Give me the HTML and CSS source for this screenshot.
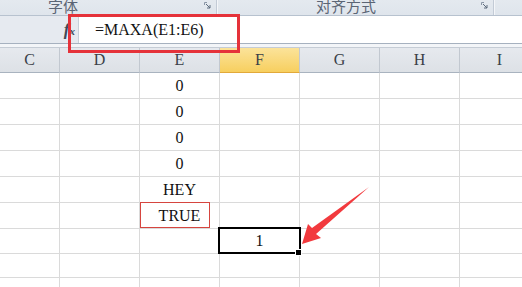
FILE: index.html
```html
<!DOCTYPE html>
<html lang="zh-CN">

<head>
    <meta charset="UTF-8">
    <title>MAXA</title>
    <link rel="stylesheet" href="styles.css">
</head>

<body>
    <div class="window">
        <!-- ribbon group labels -->
        <div class="ribbon">
            <div class="group group-font">
                <span class="group-label">字体</span>
                <svg class="launcher" width="7" height="7" viewBox="0 0 7 7">
                    <path d="M0.5 3 V0.5 H3" fill="none" stroke="#8a96a6" stroke-width="1"/>
                    <path d="M2 2 L6 6 M6 3 V6 H3" fill="none" stroke="#5d6b7d" stroke-width="1"/>
                </svg>
            </div>
            <div class="group group-align">
                <span class="group-label">对齐方式</span>
                <svg class="launcher" width="7" height="7" viewBox="0 0 7 7">
                    <path d="M0.5 3 V0.5 H3" fill="none" stroke="#8a96a6" stroke-width="1"/>
                    <path d="M2 2 L6 6 M6 3 V6 H3" fill="none" stroke="#5d6b7d" stroke-width="1"/>
                </svg>
            </div>
        </div>

        <!-- formula bar -->
        <div class="formula-bar">
            <div class="fx-area"><span class="fx">f<span class="fx-x">x</span></span></div>
            <div class="formula-input">=MAXA(E1:E6)</div>
            <div class="highlight-box"></div>
        </div>

        <div class="spacer"></div>

        <!-- sheet -->
        <div class="sheet">
            <div class="col-head">C</div>
            <div class="col-head">D</div>
            <div class="col-head">E</div>
            <div class="col-head active">F</div>
            <div class="col-head">G</div>
            <div class="col-head">H</div>
            <div class="col-head">I</div>

            <div class="cell"></div><div class="cell"></div><div class="cell">0</div><div class="cell"></div><div class="cell"></div><div class="cell"></div><div class="cell"></div>
            <div class="cell"></div><div class="cell"></div><div class="cell">0</div><div class="cell"></div><div class="cell"></div><div class="cell"></div><div class="cell"></div>
            <div class="cell"></div><div class="cell"></div><div class="cell">0</div><div class="cell"></div><div class="cell"></div><div class="cell"></div><div class="cell"></div>
            <div class="cell"></div><div class="cell"></div><div class="cell">0</div><div class="cell"></div><div class="cell"></div><div class="cell"></div><div class="cell"></div>
            <div class="cell"></div><div class="cell"></div><div class="cell">HEY</div><div class="cell"></div><div class="cell"></div><div class="cell"></div><div class="cell"></div>
            <div class="cell"></div><div class="cell"></div><div class="cell marked">TRUE</div><div class="cell"></div><div class="cell"></div><div class="cell"></div><div class="cell"></div>
            <div class="cell"></div><div class="cell"></div><div class="cell"></div><div class="cell selected">1</div><div class="cell"></div><div class="cell"></div><div class="cell"></div>
            <div class="cell"></div><div class="cell"></div><div class="cell"></div><div class="cell"></div><div class="cell"></div><div class="cell"></div><div class="cell"></div>
            <div class="cell"></div><div class="cell"></div><div class="cell"></div><div class="cell"></div><div class="cell"></div><div class="cell"></div><div class="cell"></div>

            <!-- annotation arrow -->
            <svg class="arrow" width="80" height="64" viewBox="0 0 80 64">
                <polygon points="2,57 8,37 12,41 69,0 16,47 21,51" fill="#f23a3e"/>
            </svg>
        </div>
    </div>
</body>

</html>
```

FILE: styles.css
```css
body {
    margin: 0;
    padding: 0;
    background: #ffffff;
    font-family: "Liberation Serif", "Times New Roman", serif;
}

.window {
    width: 522px;
    height: 287px;
    overflow: hidden;
    position: relative;
}

/* ribbon */
.ribbon {
    height: 15px;
    display: flex;
    background: linear-gradient(#e4e9ef, #dfe5ec);
    border-bottom: 1px solid #b7c2cf;
}

.group {
    position: relative;
    display: flex;
    align-items: flex-end;
    border-right: 1px solid #c3cbd6;
    box-shadow: 1px 0 0 #f4f6f9;
}

.group-font {
    width: 216px;
}

.group-align {
    width: 276px;
}

.group-label {
    font-family: "Noto Sans CJK SC", sans-serif;
    font-size: 15px;
    line-height: 15px;
    color: #5b6575;
    position: relative;
    top: -2px;
}

.group-font .group-label {
    margin-left: 48px;
}

.group-align .group-label {
    margin-left: 99px;
}

.launcher {
    position: absolute;
    right: 5px;
    top: 2px;
}

/* formula bar */
.formula-bar {
    position: relative;
    z-index: 2;
    height: 27px;
    display: flex;
    background: #e6eaf0;
    border-bottom: 1px solid #a6b1bf;
}

.fx-area {
    width: 78px;
    display: flex;
    align-items: center;
    justify-content: flex-end;
    padding-right: 3px;
    box-sizing: border-box;
}

.fx {
    font-family: "Liberation Serif", serif;
    font-style: italic;
    font-weight: bold;
    font-size: 17px;
    color: #3e4a5a;
}

.fx-x {
    font-size: 11px;
    font-weight: bold;
}

.formula-input {
    flex: 1;
    background: #ffffff;
    border-left: 1px solid #c7d0da;
    padding-left: 16px;
    font-size: 16px;
    line-height: 27px;
    color: #111;
}

.highlight-box {
    position: absolute;
    left: 68px;
    top: -2px;
    width: 172px;
    height: 39px;
    border: 3px solid #e5323a;
    box-sizing: border-box;
}

.spacer {
    height: 3px;
    background: #f3f5f8;
}

/* sheet grid */
.sheet {
    position: relative;
    display: grid;
    grid-template-columns: 60px repeat(6, 80px);
    grid-template-rows: 25px repeat(6, 26px) 25px 24px 26px;
    border-top: 1px solid #c5ccd5;
}

.col-head {
    background: linear-gradient(#e6e9ee, #dde1e6);
    border-right: 1px solid #c2c8d0;
    border-bottom: 1px solid #a9b3bf;
    display: flex;
    align-items: center;
    justify-content: center;
    font-size: 16px;
    color: #3a3f48;
}

.col-head.active {
    background: linear-gradient(#fbe39a, #f7cf5f);
    border-bottom-color: #e2a93a;
}

.cell {
    border-right: 1px solid #dadada;
    border-bottom: 1px solid #dadada;
    display: flex;
    align-items: center;
    justify-content: center;
    font-size: 16px;
    color: #111;
    position: relative;
}

.cell.marked::before {
    content: "";
    position: absolute;
    left: 0;
    top: -1px;
    width: 70px;
    height: 26px;
    border: 1px solid #d6453f;
    box-sizing: border-box;
}

.cell.selected::after {
    content: "";
    position: absolute;
    left: -2px;
    top: -2px;
    right: -2px;
    bottom: -1px;
    border: 2px solid #000;
}

.cell.selected::before {
    content: "";
    position: absolute;
    right: -3px;
    bottom: -3px;
    width: 5px;
    height: 5px;
    background: #000;
    border: 1px solid #fff;
    z-index: 1;
}

.arrow {
    position: absolute;
    left: 300px;
    top: 139px;
}
```
